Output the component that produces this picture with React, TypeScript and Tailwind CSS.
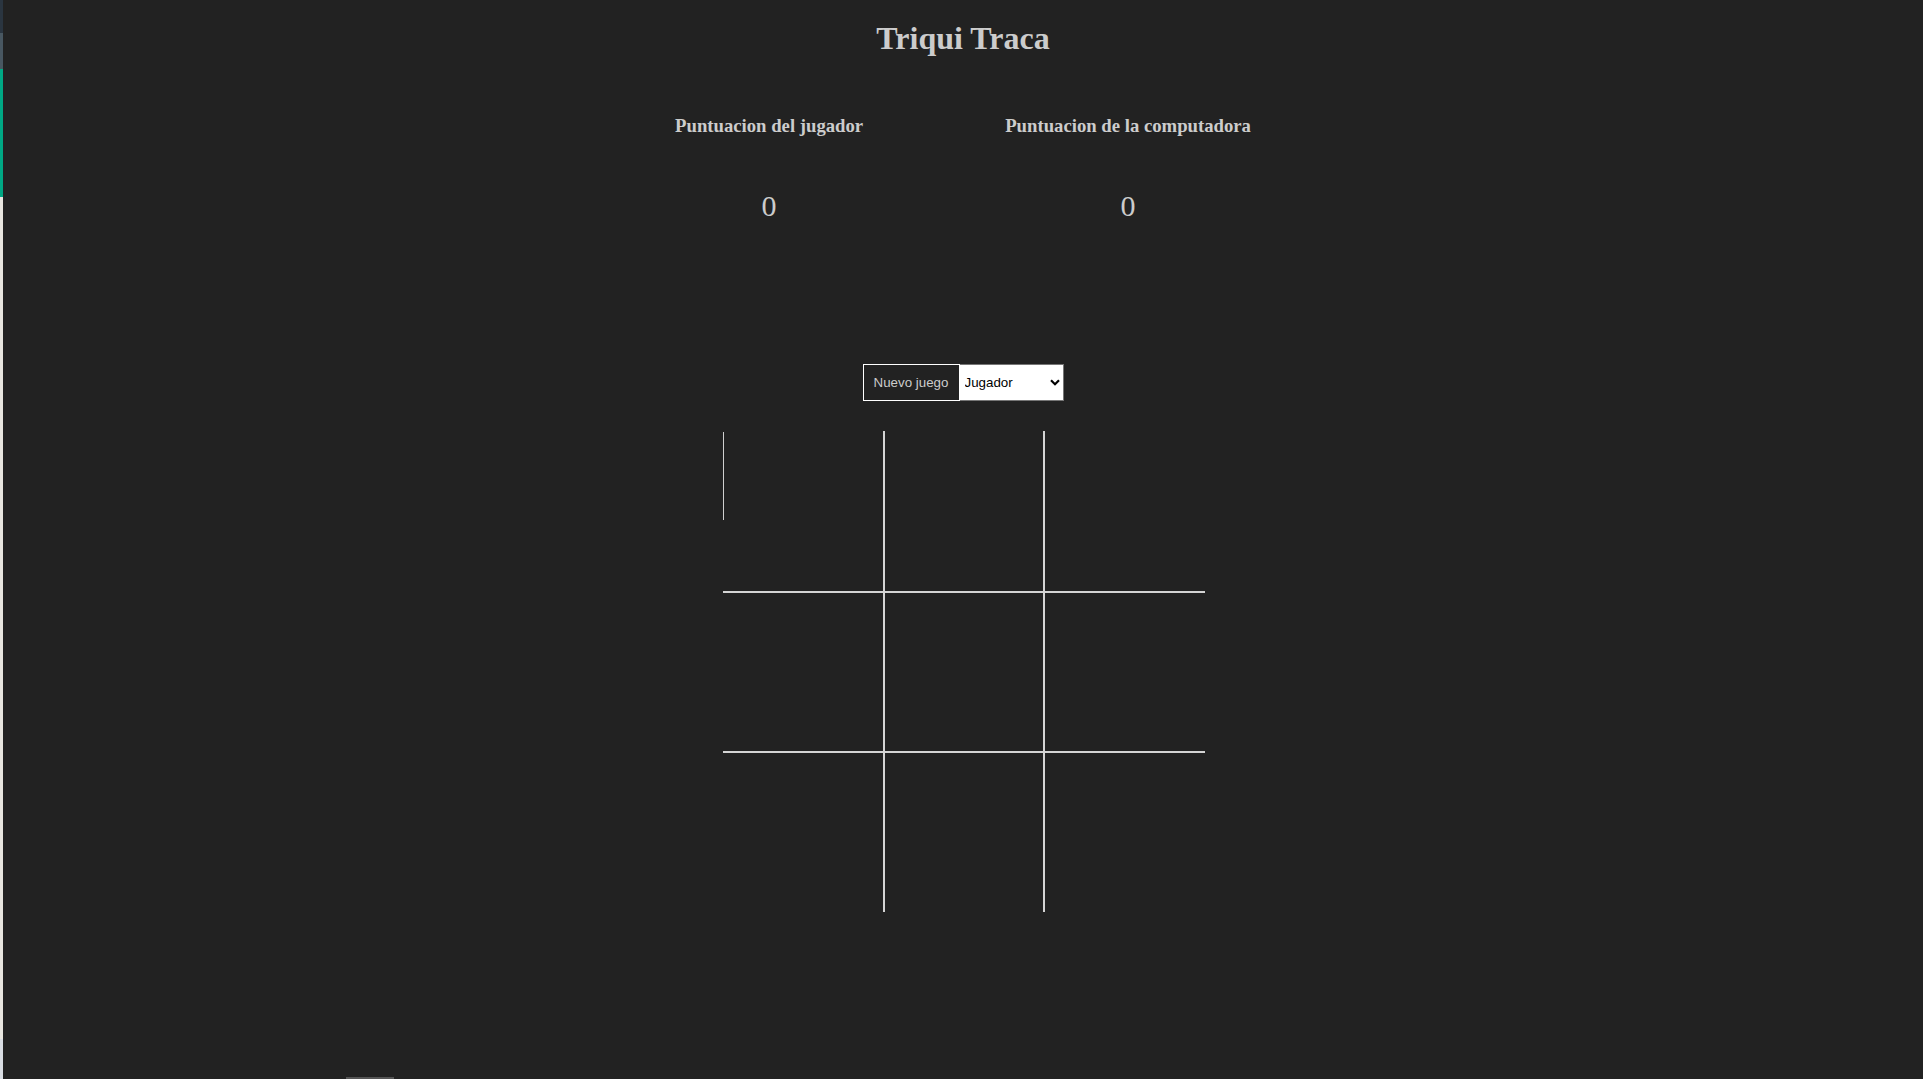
import { useState } from "react";

const serif = "font-['Liberation_Serif','Times_New_Roman',serif]";
const sans = "font-['Liberation_Sans',Arial,sans-serif]";

function Cell({ index }: { index: number }) {
  const col = index % 3;
  const row = Math.floor(index / 3);
  const right = col < 2 ? "border-r-2" : "";
  const bottom = row < 2 ? "border-b-2" : "";
  return (
    <div className={`border-[#d4d4d4] ${right} ${bottom}`}>
      {/* caret-like mark left in the first square */}
      {index === 0 && <div className="mt-px w-px h-[88px] bg-[#cfcfcf]" />}
    </div>
  );
}

export default function App() {
  const [mode, setMode] = useState("jugador");

  return (
    <div className="flex min-h-screen bg-[#222222]">
      {/* left edge strip */}
      <div className="flex flex-col w-[3px] shrink-0">
        <div className="h-[33px] bg-[#2a3540]" />
        <div className="h-[36px] bg-[#485761]" />
        <div className="h-[128px] bg-[#00a884]" />
        <div className="flex-1 bg-[#e8e6e0]" />
        <div className="h-[40px] bg-[#d9dde3]" />
      </div>

      <div className="flex-1 flex flex-col items-center">
        <h1
          className={`${serif} mt-[20px] text-[32px] leading-[36px] font-bold text-[#cccccc]`}
        >
          Triqui Traca
        </h1>

        <div className="mt-[59px] flex gap-[142px]">
          <div className="flex flex-col items-center">
            <h3
              className={`${serif} whitespace-nowrap text-[18.72px] leading-[22px] font-bold text-[#cccccc]`}
            >
              Puntuacion del jugador
            </h3>
            <p className={`${serif} mt-[52px] text-[30px] leading-[34px] text-[#cccccc]`}>0</p>
          </div>
          <div className="flex flex-col items-center">
            <h3
              className={`${serif} whitespace-nowrap text-[18.72px] leading-[22px] font-bold text-[#cccccc]`}
            >
              Puntuacion de la computadora
            </h3>
            <p className={`${serif} mt-[52px] text-[30px] leading-[34px] text-[#cccccc]`}>0</p>
          </div>
        </div>

        <div className="mt-[141px] flex">
          <button
            className={`${sans} h-[37px] w-[97px] border border-white bg-[#222222] text-[13.33px] text-[#cccccc]`}
          >
            Nuevo juego
          </button>
          <div className="relative">
            <select
              value={mode}
              onChange={(e) => setMode(e.target.value)}
              className={`${sans} appearance-none h-[37px] w-[104px] pl-[5px] bg-white border border-[#767676] border-l-0 text-[13.33px] text-black outline-none`}
            >
              <option value="jugador">Jugador</option>
              <option value="computadora">Computadora</option>
            </select>
            <svg
              className="pointer-events-none absolute right-[4px] top-[15px] w-[10px] h-[7px]"
              viewBox="0 0 10 7"
              fill="none"
              stroke="#000"
              strokeWidth="2.2"
            >
              <path d="M1 1.2 L5 5.2 L9 1.2" />
            </svg>
          </div>
        </div>

        <div className="mt-[30px] ml-[2px] grid grid-cols-[162px_160px_160px] grid-rows-[162px_160px_159px]">
          {Array.from({ length: 9 }).map((_, i) => (
            <Cell key={i} index={i} />
          ))}
        </div>
      </div>

      {/* thin scrollbar-like mark at the bottom */}
      <div className="fixed left-[346px] bottom-0 w-[48px] h-[2px] bg-[#555555]" />
    </div>
  );
}
